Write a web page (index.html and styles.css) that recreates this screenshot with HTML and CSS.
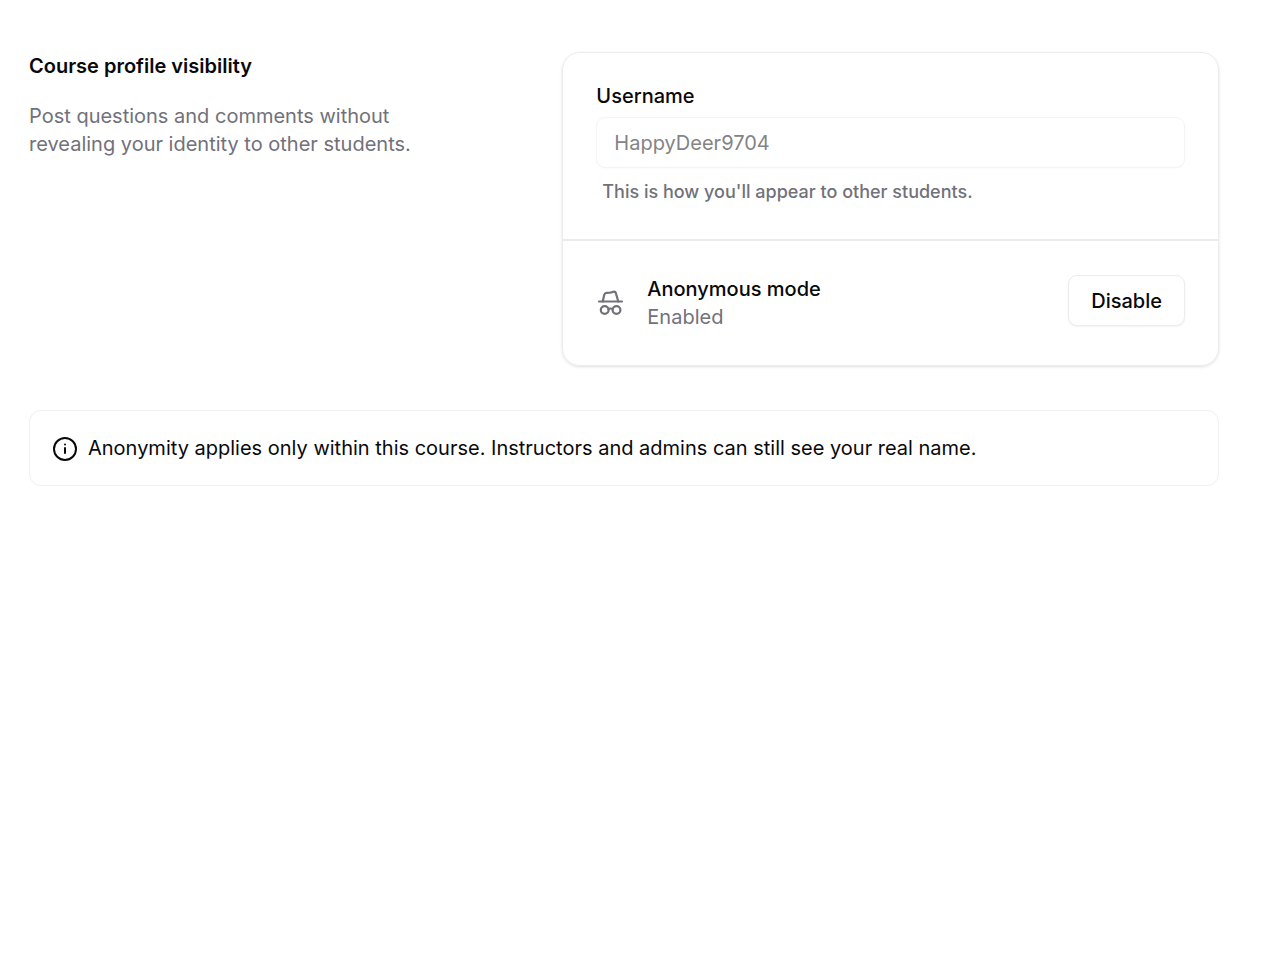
FILE: index.html
```html
<!DOCTYPE html>
<html lang="en">
<head>
  <meta charset="utf-8" />
  <meta name="viewport" content="width=device-width, initial-scale=1" />
  <title>Course profile visibility</title>
  <link rel="stylesheet" href="styles.css">
</head>
<body>
  <main>
    <section class="settings">
      <div class="intro">
        <h1>Course profile visibility</h1>
        <p>Post questions and comments without revealing your identity to other students.</p>
      </div>
      <div class="card">
        <div class="card-section">
          <label for="username">Username</label>
          <input type="text" id="username" name="username" value="HappyDeer9704" aria-describedby="usernameHint" disabled />
          <p class="hint" id="usernameHint">This is how you'll appear to other students.</p>
        </div>
        <div class="card-section mode">
          <svg class="mode-icon" viewBox="0 0 28 28" aria-hidden="true">
            <path d="M3 12.500h23" />
            <path d="M6.700 12.500l1.500-6.500Q8.600 4.100 10.300 3.900L14 3.700Q15 3.600 16 3.200L17.200 2.800Q19.300 2.300 19.900 4.200L22.300 12.500" />
            <circle cx="8.700" cy="21" r="3.900" />
            <circle cx="20.500" cy="21" r="3.900" />
            <path d="M12.500 20q2.100-1 4.200 0" />
          </svg>
          <div class="mode-text">
            <h2>Anonymous mode</h2>
            <p>Enabled</p>
          </div>
          <button type="button">Disable</button>
        </div>
      </div>
    </section>
    <div class="notice">
      <svg class="info-icon" viewBox="0 0 26 26" aria-hidden="true">
        <circle cx="13" cy="14" r="11" />
        <path d="M13 18v-5M13 9.500h.01" />
      </svg>
      <p>Anonymity applies only within this course. Instructors and admins can still see your real name.</p>
    </div>
  </main>
</body>
</html>
```
FILE: styles.css
```css
* {
  box-sizing: border-box;
}
body {
  margin: 0;
  background: #fff;
  color: #09090b;
  font-family: Inter, "Liberation Sans", sans-serif;
  font-size: 20px;
  line-height: 28px;
}
h1, h2, p {
  margin: 0;
  font-size: 20px;
}
main {
  padding: 52px 61px 52px 29px;
}
.settings {
  display: grid;
  grid-template-columns: 4fr 5fr;
  gap: 8px;
  margin-bottom: 44px;
}
.intro {
  max-width: 400px;
}
h1 {
  font-weight: 600;
  margin-bottom: 22px;
}
.intro p, .mode-text p {
  color: #71717a;
}
.card {
  border: 1px solid #ececee;
  border-radius: 18px;
  box-shadow: 0 1px 3px rgba(0,0,0,0.12);
}
.card-section {
  padding: 34px 33px;
}
.card-section:first-child {
  padding-bottom: 33px;
}
.card-section + .card-section {
  border-top: 2px solid #ebebed;
}
label {
  display: block;
  font-weight: 500;
  line-height: 18px;
  margin-bottom: 12px;
}
input {
  display: block;
  width: 100%;
  height: 51px;
  padding: 0 17px;
  border: 1px solid #f4f4f5;
  border-radius: 9px;
  background: #fff;
  box-shadow: 0 1px 2px rgba(0,0,0,0.02);
  color: #848484;
  font: inherit;
}
.hint {
  margin-top: 10px;
  padding: 0 6px;
  color: #71717a;
  font-size: 18px;
  font-weight: 500;
}
.mode {
  display: flex;
  align-items: flex-start;
}
.mode-icon {
  align-self: center;
  width: 28px;
  height: 28px;
  margin-right: 23px;
  fill: none;
  stroke: #71717a;
  stroke-width: 2.2;
  stroke-linecap: round;
  stroke-linejoin: round;
}
.mode-text {
  flex: 1;
}
h2 {
  font-weight: 500;
}
button {
  height: 51px;
  padding: 0 22px;
  border: 1px solid #ececee;
  border-radius: 9px;
  background: #fff;
  box-shadow: 0 1px 2px rgba(0,0,0,0.05);
  color: inherit;
  font: inherit;
  font-weight: 500;
  cursor: pointer;
}
button:hover {
  background: #f4f4f5;
}
.notice {
  display: flex;
  align-items: center;
  padding: 23px 22px;
  border: 1px solid #f0f0f1;
  border-radius: 12px;
}
.info-icon {
  flex-shrink: 0;
  width: 26px;
  height: 26px;
  margin-right: 10px;
  fill: none;
  stroke: #09090b;
  stroke-width: 2;
  stroke-linecap: round;
}
/* Stack the description above the card on narrow screens */
@media (max-width: 800px) {
  main {
    padding: 24px;
  }
  .settings {
    grid-template-columns: 1fr;
    gap: 24px;
  }
}
```
